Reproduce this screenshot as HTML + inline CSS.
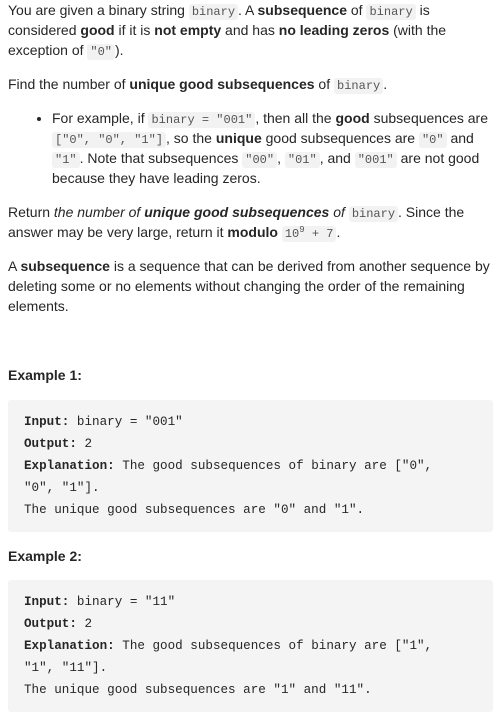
<!DOCTYPE html>
<html><head><meta charset="utf-8"><style>
body{margin:0;background:#fff;font-family:"Liberation Sans",sans-serif;font-size:14px;color:#262626;width:493px;overflow:hidden}
.w{padding:0 0 0 8px}
p{margin:0 0 14px;line-height:20px}
code{font-family:"Liberation Mono",monospace;font-size:12px;line-height:1;background:#f2f2f2;padding:1px 3px;border-radius:3px;color:#555}
sup{line-height:0;font-size:9px}
ul{margin:0 0 14px;padding-left:44px;line-height:20px}
li{margin:0}
h4{font-size:14px;font-weight:bold;margin:0;line-height:20px}
pre{background:#f4f4f4;margin:0;padding:11px 40px 11px 16px;border-radius:3px;font-family:"Liberation Mono",monospace;font-size:12.6px;line-height:22px;color:#262626;white-space:pre-wrap}
pre b{font-weight:bold}
</style></head><body><div class="w">
<p>You are given a binary string <code>binary</code>. A <b>subsequence</b> of <code>binary</code> is considered <b>good</b> if it is <b>not empty</b> and has <b>no leading zeros</b> (with the exception of <code>"0"</code>).</p>
<p>Find the number of <b>unique good subsequences</b> of <code>binary</code>.</p>
<ul><li>For example, if <code>binary = "001"</code>, then all the <b>good</b> subsequences are <code>["0", "0", "1"]</code>, so the <b>unique</b> good subsequences are <code>"0"</code> and <code>"1"</code>. Note that subsequences <code>"00"</code>, <code>"01"</code>, and <code>"001"</code> are not good because they have leading zeros.</li></ul>
<p>Return <i>the number of </i><b><i>unique good subsequences</i></b><i> of </i><code>binary</code>. Since the answer may be very large, return it <b>modulo</b> <code>10<sup>9</sup> + 7</code>.</p>
<p>A <b>subsequence</b> is a sequence that can be derived from another sequence by deleting some or no elements without changing the order of the remaining elements.</p>
<div style="height:38px"></div>
<h4 style="margin-top:-3px">Example 1:</h4>
<div style="height:15px"></div>
<pre><b>Input:</b> binary = "001"
<b>Output:</b> 2
<b>Explanation:</b> The good subsequences of binary are ["0", "0", "1"].
The unique good subsequences are "0" and "1".</pre>
<div style="height:14px"></div>
<h4>Example 2:</h4>
<div style="height:14px"></div>
<pre><b>Input:</b> binary = "11"
<b>Output:</b> 2
<b>Explanation:</b> The good subsequences of binary are ["1", "1", "11"].
The unique good subsequences are "1" and "11".</pre>
</div></body></html>
